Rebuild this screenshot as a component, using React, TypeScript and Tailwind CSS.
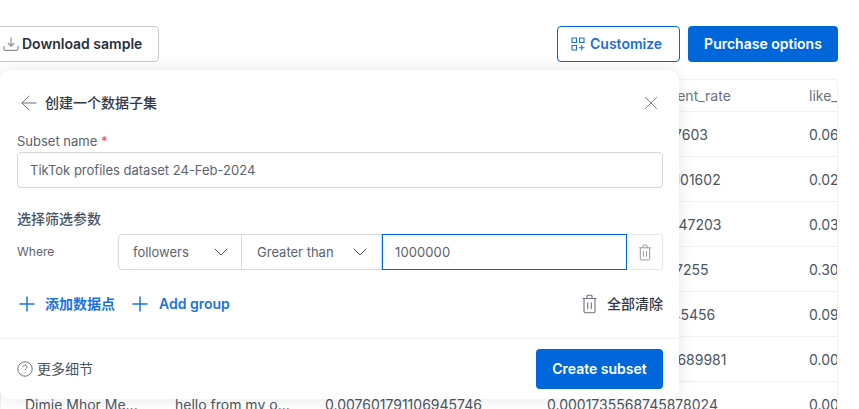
import { ArrowLeft, ChevronDown, Plus, X } from 'lucide-react';

const rows = [
  ['Lina Park', 'daily vlogs and...', '0.01832047716329', '0.001204538176287603', '0.0641'],
  ['Marco Diaz', 'music, dance a...', '0.02274190835562', '0.00041173625043101602', '0.0213'],
  ['Sofia Reyes', 'welcome to my...', '0.00938271640518', '0.0009136205843047203', '0.0352'],
  ['Tom Becker', 'just for fun an...', '0.31029485716204', '0.002184650392187255', '0.3057'],
  ['Aya Tanaka', 'food and travel...', '0.09417362058144', '0.000726384035545456', '0.0918'],
  ['Noah Lewis', 'follow for more...', '0.00483920175633', '0.00005271943682689981', '0.0047'],
  ['Dimie Mhor Me...', 'hello from my o...', '0.007601791106945746', '0.0001735568745878024', '0.0074'],
];

function TrashIcon({ className }: { className: string }) {
  return (
    <svg viewBox="0 0 16 20" fill="none" stroke="currentColor" strokeWidth="1.1" className={className}>
      <path d="M1 4.5h14M5.5 4.5V2.2c0-.5.4-.9.9-.9h3.200c.5 0 .9.4.9.9v2.300M2.500 4.500v13c0 .7.500 1.200 1.200 1.200h8.600c.7 0 1.200-.5 1.200-1.200v-13M6.200 8.500v6.500M9.800 8.500v6.500" />
    </svg>
  );
}

export default function App() {
  return (
    <div className="relative h-[409px] w-[859px] overflow-hidden bg-white font-['Inter','Noto_Sans_CJK_SC',sans-serif]">
      {/* Toolbar */}
      <div className="flex h-[62px] items-end pr-[21px]">
        <button className="ml-[-6px] flex h-9 w-[165px] items-center rounded border border-[#c5cad1] pl-[8px] text-sm font-semibold text-[#27303d]">
          <svg viewBox="0 0 16 16" fill="none" stroke="#8b9097" strokeWidth="1.200" className="mr-[3px] h-[16px] w-[16px] shrink-0">
            <path d="M8 1.500v8.500M4.800 7l3.200 3.200L11.200 7M1 10v3.200c0 .7.500 1.200 1.200 1.200h11.600c.7 0 1.200-.5 1.200-1.200V10" />
          </svg>
          Download sample
        </button>
        <div className="ml-auto flex gap-2">
          <button className="flex h-9 w-[123px] items-center gap-[5px] rounded border border-[#0067db] pl-[13px] text-sm font-semibold text-[#1a6fd8]">
            <svg viewBox="0 0 14 14" fill="none" stroke="currentColor" strokeWidth="1.100" className="h-[14px] w-[14px]">
              <path d="M1 1h4.500v4.500H1zM8.500 1H13v4.500H8.500zM1 8.500h4.500V13H1zM10.700 8v5.500M8 10.700h5.500" />
            </svg>
            Customize
          </button>
          <button className="h-9 w-[150px] rounded bg-[#0067db] text-sm font-semibold text-white">Purchase options</button>
        </div>
      </div>

      {/* Table behind the dialog */}
      <div className="mr-[21px] mt-[17px] overflow-hidden rounded-t border border-b-0 border-[#f0f1f3] text-sm text-[#4b5563]">
        <div className="flex h-[32px] items-center border-b border-[#f0f1f3] text-[#6b7280]">
          <div className="w-[546px] shrink-0" />
          <div className="w-[262px] shrink-0 whitespace-nowrap">engagement_comment_rate</div>
          <div className="shrink-0">like_rate</div>
        </div>
        {rows.map((row) => (
          <div key={row[0]} className="flex h-[45px] items-center border-b border-[#f0f1f3] pt-[1px] whitespace-nowrap">
            <div className="w-[24px] shrink-0" />
            <div className="w-[150px] shrink-0">{row[0]}</div>
            <div className="w-[150px] shrink-0">{row[1]}</div>
            <div className="w-[222px] shrink-0">{row[2]}</div>
            <div className="w-[262px] shrink-0">{row[3]}</div>
            <div className="shrink-0">{row[4]}</div>
          </div>
        ))}
      </div>

      {/* Dialog */}
      <div className="absolute left-0 top-[70px] flex h-[329px] w-[679px] flex-col rounded-[10px] bg-white shadow-[0_0_16px_rgba(0,0,0,0.1)]">
        <div className="flex h-[63px] items-center pl-[17px] pr-[17px] pt-[3px]">
          <ArrowLeft size={24} strokeWidth={1} className="text-[#6b7280]" />
          <span className="ml-[4px] text-sm font-medium text-[#333a45]">创建一个数据子集</span>
          <X size={22} strokeWidth={1} className="ml-auto text-[#6b7280]" />
        </div>
        <div className="pl-[17px] pr-[16px]">
          <div className="text-[13px] leading-[16px] text-[#5b6370]">
            Subset name <span className="text-[#e5484d]">*</span>
          </div>
          <div className="mt-[3px] flex h-9 items-center rounded border border-[#d5d7db] pl-[12px] pt-[2px] text-[13px] text-[#5b6370]">
            TikTok profiles dataset 24-Feb-2024
          </div>
          <div className="mt-[21px] text-sm font-medium leading-[20px] text-[#4b5563]">选择筛选参数</div>
          <div className="mt-[5px] flex h-9 items-center">
            <span className="w-[101px] text-xs text-[#5b6370]">Where</span>
            <div className="flex h-9 w-[124px] items-center justify-between rounded-l border border-[#d5d9e0] pl-[14px] pr-[8px] text-[13px] text-[#5b6370]">
              <span className="pt-[1px]">followers</span>
              <ChevronDown size={24} strokeWidth={1} className="text-[#4b5563]" />
            </div>
            <div className="flex h-9 w-[140px] items-center justify-between border-y border-r border-[#d5d9e0] pl-[15px] pr-[9px] text-[13px] text-[#5b6370]">
              <span className="pt-[1px]">Greater than</span>
              <ChevronDown size={24} strokeWidth={1} className="text-[#4b5563]" />
            </div>
            <div className="flex h-9 w-[245px] items-center border border-[#0067db] pl-[12px] pt-[1px] text-[13px] tracking-[0.1px] text-[#5b6370]">1000000</div>
            <div className="flex h-9 w-[36px] items-center justify-center rounded-r border-y border-r border-[#e5e7eb]">
              <TrashIcon className="h-[17px] w-[14px] text-[#8b9097]" />
            </div>
          </div>
          <div className="mt-[22px] flex h-[24px] items-center text-sm font-semibold text-[#1a74dd]">
            <Plus size={24} strokeWidth={1.500} className="ml-[-2px]" />
            <span className="ml-[6px]">添加数据点</span>
            <Plus size={24} strokeWidth={1.500} className="ml-[13px]" />
            <span className="ml-[7px]">Add group</span>
            <TrashIcon className="ml-auto h-[20px] w-[17px] text-[#6b7280]" />
            <span className="ml-[9px] font-medium text-[#333a45]">全部清除</span>
          </div>
        </div>
        <div className="mt-[22px] flex flex-1 items-center border-t border-[#eeeff1] pl-[17px] pr-[16px]">
          <svg viewBox="0 0 16 16" fill="none" stroke="#5b6370" strokeWidth="0.900" className="h-[16px] w-[16px]">
            <circle cx="8" cy="8" r="7.200" />
            <path d="M6 6.200c0-1.200.9-2 2-2s2 .8 2 1.900c0 1.500-2 1.600-2 3.100M8 11v.9" />
          </svg>
          <span className="ml-[4px] text-sm text-[#4b5563]">更多细节</span>
          <button className="ml-auto h-10 w-[127px] rounded bg-[#0067db] text-sm font-semibold text-white">Create subset</button>
        </div>
      </div>
    </div>
  );
}
